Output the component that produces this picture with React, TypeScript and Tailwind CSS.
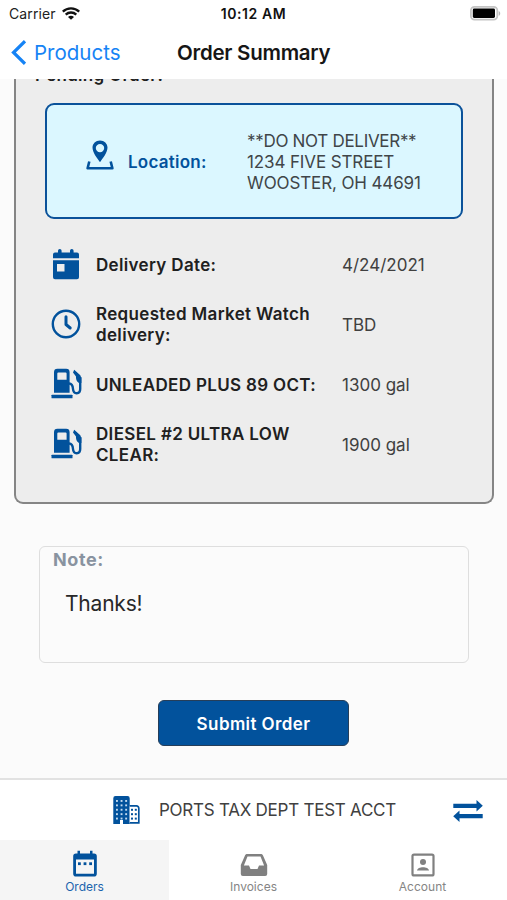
import type { ReactNode } from 'react';

function WifiIcon() {
  return (
    <svg className="w-[18px] h-[13px]" viewBox="0 0 18 13" fill="none" stroke="#111" strokeWidth="2.3">
      <path d="M0.8 4.6C5.4 0.3 12.6 0.3 17.2 4.6" />
      <path d="M3.7 7.6C6.7 4.8 11.3 4.8 14.3 7.6" />
      <path d="M9 12.8L6 9.9C7.7 8.4 10.3 8.4 12 9.9Z" fill="#111" stroke="none" />
    </svg>
  );
}

function BatteryIcon() {
  return (
    <svg className="w-[31px] h-[15px]" viewBox="0 0 31 15">
      <rect x="0.9" y="0.9" width="26.4" height="12.8" rx="3.6" fill="#fff" stroke="#c4c4c4" strokeWidth="1.8" />
      <rect x="2.8" y="2.6" width="22.2" height="9.4" rx="1.4" fill="#000" />
      <path d="M28.7 4.9c2 .8 2 4 0 4.8z" fill="#b5b5b5" />
    </svg>
  );
}

function LocationIcon() {
  return (
    <svg className="w-[28px] h-[30px]" viewBox="0 0 28 30" fill="none">
      <path
        fillRule="evenodd"
        fill="#02529c"
        d="M14 0.5C9.7 0.5 6.5 3.7 6.5 7.6C6.5 12.4 11 18.3 14 22.2C17 18.3 21.5 12.4 21.5 7.6C21.5 3.7 18.3 0.5 14 0.5ZM14 3.9a4.2 4.2 0 1 1 0 8.4a4.2 4.2 0 1 1 0-8.4Z"
      />
      <path d="M3.3 21.5L1.6 28.3H26.4L24.7 21.5" stroke="#02529c" strokeWidth="2.6" strokeLinejoin="round" />
    </svg>
  );
}

function DateIcon() {
  return (
    <svg className="w-[28px] h-[31px]" viewBox="0 0 28 31" fill="#02529c">
      <path d="M3 3.5H6V1.8a1.8 1.8 0 0 1 3.6 0V3.5H18V1.8a1.8 1.8 0 0 1 3.6 0V3.5H25a2 2 0 0 1 2 2V9.2H1V5.5a2 2 0 0 1 2-2Z" />
      <path fillRule="evenodd" d="M1 11.3H27V28.2a2 2 0 0 1-2 2H3a2 2 0 0 1-2-2ZM5 15V22.6H12.5V15Z" />
    </svg>
  );
}

function ClockIcon() {
  return (
    <svg className="w-[30px] h-[30px]" viewBox="0 0 30 30" fill="none" stroke="#02529c" strokeLinecap="round">
      <circle cx="15" cy="15" r="13.2" strokeWidth="2.4" />
      <path d="M15 7.8V15.5L19.2 19" strokeWidth="3" strokeLinejoin="round" />
    </svg>
  );
}

function PumpIcon() {
  return (
    <svg className="-mt-[1px] w-[31px] h-[31px]" viewBox="0 0 31 31" fill="none">
      <path
        fillRule="evenodd"
        fill="#02529c"
        d="M6.4 0.8H15.2a3.4 3.4 0 0 1 3.4 3.4V24.7H3V4.2A3.4 3.4 0 0 1 6.4 0.8ZM7.3 4.4a1 1 0 0 0-1 1V11.7H15.6V5.4a1 1 0 0 0-1-1Z"
      />
      <rect x="0.5" y="26.7" width="21" height="3.6" rx="0.6" fill="#02529c" />
      <path
        d="M18 15.5C21.5 15.5 21.8 18 22 21C22.4 26.7 29.2 26.5 29.2 21V9"
        stroke="#02529c"
        strokeWidth="2.4"
      />
      <path d="M23.2 1.8L29.3 7.2L30.4 10V15H28C25.500 13.500 24.800 11 25 8.500L22 4.500Z" fill="#02529c" />
    </svg>
  );
}

function BuildingIcon() {
  const rows = [4, 8.4, 12.8, 17.2, 21.6];
  return (
    <svg className="w-[27px] h-[28px]" viewBox="0 0 27 28">
      <path d="M2.5 0H14.5a2.2 2.2 0 0 1 2.2 2.2V28H10V24H7V28H0.3V2.2A2.2 2.2 0 0 1 2.5 0Z" fill="#02529c" />
      <path d="M16.7 9.9H23.5a2.3 2.3 0 0 1 2.3 2.3V26.9H16.7" fill="#fff" stroke="#02529c" strokeWidth="1.7" />
      {rows.map((y) => (
        <g key={y} fill="#c3daef">
          <rect x="3" y={y} width="1.9" height="1.9" />
          <rect x="7.6" y={y} width="1.9" height="1.9" />
          <rect x="12.2" y={y} width="1.9" height="1.9" />
        </g>
      ))}
      {rows.slice(2).map((y) => (
        <g key={y} fill="#02529c">
          <rect x="18" y={y} width="2" height="2" />
          <rect x="21.8" y={y} width="2" height="2" />
        </g>
      ))}
    </svg>
  );
}

function SwapIcon() {
  return (
    <svg className="mt-[2px] w-[30px] h-[22px]" viewBox="0 0 30 22" fill="#02529c">
      <path d="M0.3 3.7H23.5V0L29.8 5.7L23.5 11.4V7.9H0.3Z" />
      <path d="M29.7 14.1H6.5V10.5L0.2 16.2L6.5 22V18.3H29.7Z" />
    </svg>
  );
}

function OrdersIcon() {
  return (
    <svg className="w-[24px] h-[27px]" viewBox="0 0 24 27">
      <path
        fillRule="evenodd"
        fill="#02529c"
        d="M3 3.5H4.5V0.8H7V3.5H17V0.8H19.5V3.5H21A2.8 2.8 0 0 1 23.8 6.3V23.7A2.8 2.8 0 0 1 21 26.5H3A2.8 2.8 0 0 1 0.2 23.7V6.3A2.8 2.8 0 0 1 3 3.5ZM3 9.5V23.7H21V9.5Z"
      />
      <g fill="#02529c">
        <rect x="5" y="12.3" width="2.8" height="2.8" />
        <rect x="10.6" y="12.3" width="2.8" height="2.8" />
        <rect x="16.2" y="12.3" width="2.8" height="2.8" />
      </g>
    </svg>
  );
}

function InvoicesIcon() {
  return (
    <svg className="w-[28px] h-[27px]" viewBox="0 0 28 27">
      <path
        fillRule="evenodd"
        fill="#808080"
        d="M7.2 4H20.8C22 4 22.6 4.5 23 5.5L27.2 15V24A2 2 0 0 1 25.2 26H2.8A2 2 0 0 1 0.8 24V15L5 5.5C5.4 4.5 6 4 7.2 4ZM7.5 6.6L3.9 15.5H9L10.5 19H17.5L19 15.5H24.1L20.5 6.6Z"
      />
    </svg>
  );
}

function AccountIcon() {
  return (
    <svg className="w-[24px] h-[27px]" viewBox="0 0 24 27" fill="#808080">
      <rect x="1.5" y="4.6" width="21" height="20.8" rx="1.5" fill="none" stroke="#808080" strokeWidth="2.2" />
      <circle cx="12" cy="12" r="3" />
      <path d="M6 20.5C6.5 16 17.5 16 18 20.5Z" />
    </svg>
  );
}

function DetailRow({ icon, label, value }: { icon: ReactNode; label: ReactNode; value: string }) {
  return (
    <div className="flex items-center h-[60px]">
      <div className="w-[34px] flex justify-center shrink-0">{icon}</div>
      <div className="w-[259px] pt-[2px] pl-[13px] shrink-0 font-semibold tracking-[0.34px] text-[#202020] whitespace-nowrap">
        {label}
      </div>
      <div className="pt-[2px] text-[#404040]">{value}</div>
    </div>
  );
}

export default function App() {
  return (
    <div className="w-[507px] h-[900px] flex flex-col overflow-hidden bg-[#fbfbfb] font-['Inter','Liberation_Sans',sans-serif] text-[17px] leading-[21px]">
      {/* Status bar and navigation */}
      <header className="h-[79px] shrink-0 bg-white">
        <div className="h-[26px] grid grid-cols-3 items-center pl-[9px] pr-[6px] text-[14px] text-[#222]">
          <div className="flex items-center gap-[6px] tracking-[0.1px]">
            <span>Carrier</span>
            <WifiIcon />
          </div>
          <div className="-ml-[3px] text-center font-semibold tracking-[0.6px] text-[#111]">10:12 AM</div>
          <div className="flex justify-end">
            <BatteryIcon />
          </div>
        </div>
        <div className="h-[53px] flex items-center pl-[11px] text-[20.5px]">
          <div className="w-[166px] flex items-center gap-[8px] text-[#1683f5]">
            <svg className="w-[15px] h-[25px]" viewBox="0 0 15 25" fill="none" stroke="#1683f5" strokeWidth="3.2">
              <path d="M14 1.2L2.5 12.5L14 23.8" />
            </svg>
            <span>Products</span>
          </div>
          <h1 className="font-semibold tracking-[-0.26px] text-[#161616] whitespace-nowrap">Order Summary</h1>
        </div>
      </header>

      {/* Order details */}
      <main className="flex-1 min-h-0 overflow-hidden">
        <section className="ml-[14px] mr-[13px] h-[425px] overflow-hidden bg-[#ededed] border-2 border-t-0 border-[#858585] rounded-b-[9px]">
          <h2 className="-mt-[14px] pl-[19px] font-semibold tracking-[0.3px] text-[#202020]">Pending Order:</h2>
          <div className="mt-[17px] ml-[29px] w-[418px] h-[116px] flex items-center border-2 border-[#0b529a] rounded-[9px] bg-[#dbf7ff]">
            <div className="w-[200px] pl-[39px] flex items-center gap-[14px] font-semibold tracking-[0.25px] text-[#02529c]">
              <div className="-mt-[12px]">
                <LocationIcon />
              </div>
              <span className="pt-[2px]">Location:</span>
            </div>
            <div className="pt-[2px] tracking-[-0.12px] text-[#404548] whitespace-nowrap">
              <p className="tracking-[-0.3px]">**DO NOT DELIVER**</p>
              <p>1234 FIVE STREET</p>
              <p>WOOSTER, OH 44691</p>
            </div>
          </div>
          <div className="mt-[15px] ml-[33px]">
            <DetailRow icon={<DateIcon />} label="Delivery Date:" value="4/24/2021" />
            <DetailRow icon={<ClockIcon />} label={<>Requested Market Watch<br />delivery:</>} value="TBD" />
            <DetailRow icon={<PumpIcon />} label="UNLEADED PLUS 89 OCT:" value="1300 gal" />
            <DetailRow icon={<PumpIcon />} label={<>DIESEL #2 ULTRA LOW<br />CLEAR:</>} value="1900 gal" />
          </div>
        </section>

        <section className="mt-[42px] ml-[39px] mr-[38px] h-[117px] border-[1.5px] border-[#dedede] rounded-[6px] pl-[13px]">
          <div className="pt-[2px] text-[18px] font-bold tracking-[0.6px] text-[#8993a0]">Note:</div>
          <p className="mt-[23px] pl-[12px] text-[21px] tracking-[-0.2px] text-[#282828]">Thanks!</p>
        </section>

        <button className="block mt-[37px] mx-auto w-[191px] h-[46px] pt-[2px] rounded-[6px] border border-[#263e59] bg-[#02529c] text-white font-semibold tracking-[0.4px]">
          Submit Order
        </button>
      </main>

      {/* Selected account */}
      <div className="h-[62px] shrink-0 flex items-center bg-white border-t-2 border-[#e2e2e2] pl-[112.5px] pr-[24px] text-[#404040]">
        <BuildingIcon />
        <span className="ml-[19.5px] flex-1 tracking-[-0.25px] whitespace-nowrap">PORTS TAX DEPT TEST ACCT</span>
        <SwapIcon />
      </div>

      {/* Tabs */}
      <nav className="h-[60px] shrink-0 grid grid-cols-3 bg-white text-[12px] leading-[16px] text-[#858585]">
        <div className="flex flex-col items-center pt-[10px] gap-[2px] bg-[#f5f5f5] text-[#1c64ad]">
          <OrdersIcon />
          <span>Orders</span>
        </div>
        <div className="flex flex-col items-center pt-[10px] gap-[2px]">
          <InvoicesIcon />
          <span>Invoices</span>
        </div>
        <div className="flex flex-col items-center pt-[10px] gap-[2px]">
          <AccountIcon />
          <span>Account</span>
        </div>
      </nav>
    </div>
  );
}
